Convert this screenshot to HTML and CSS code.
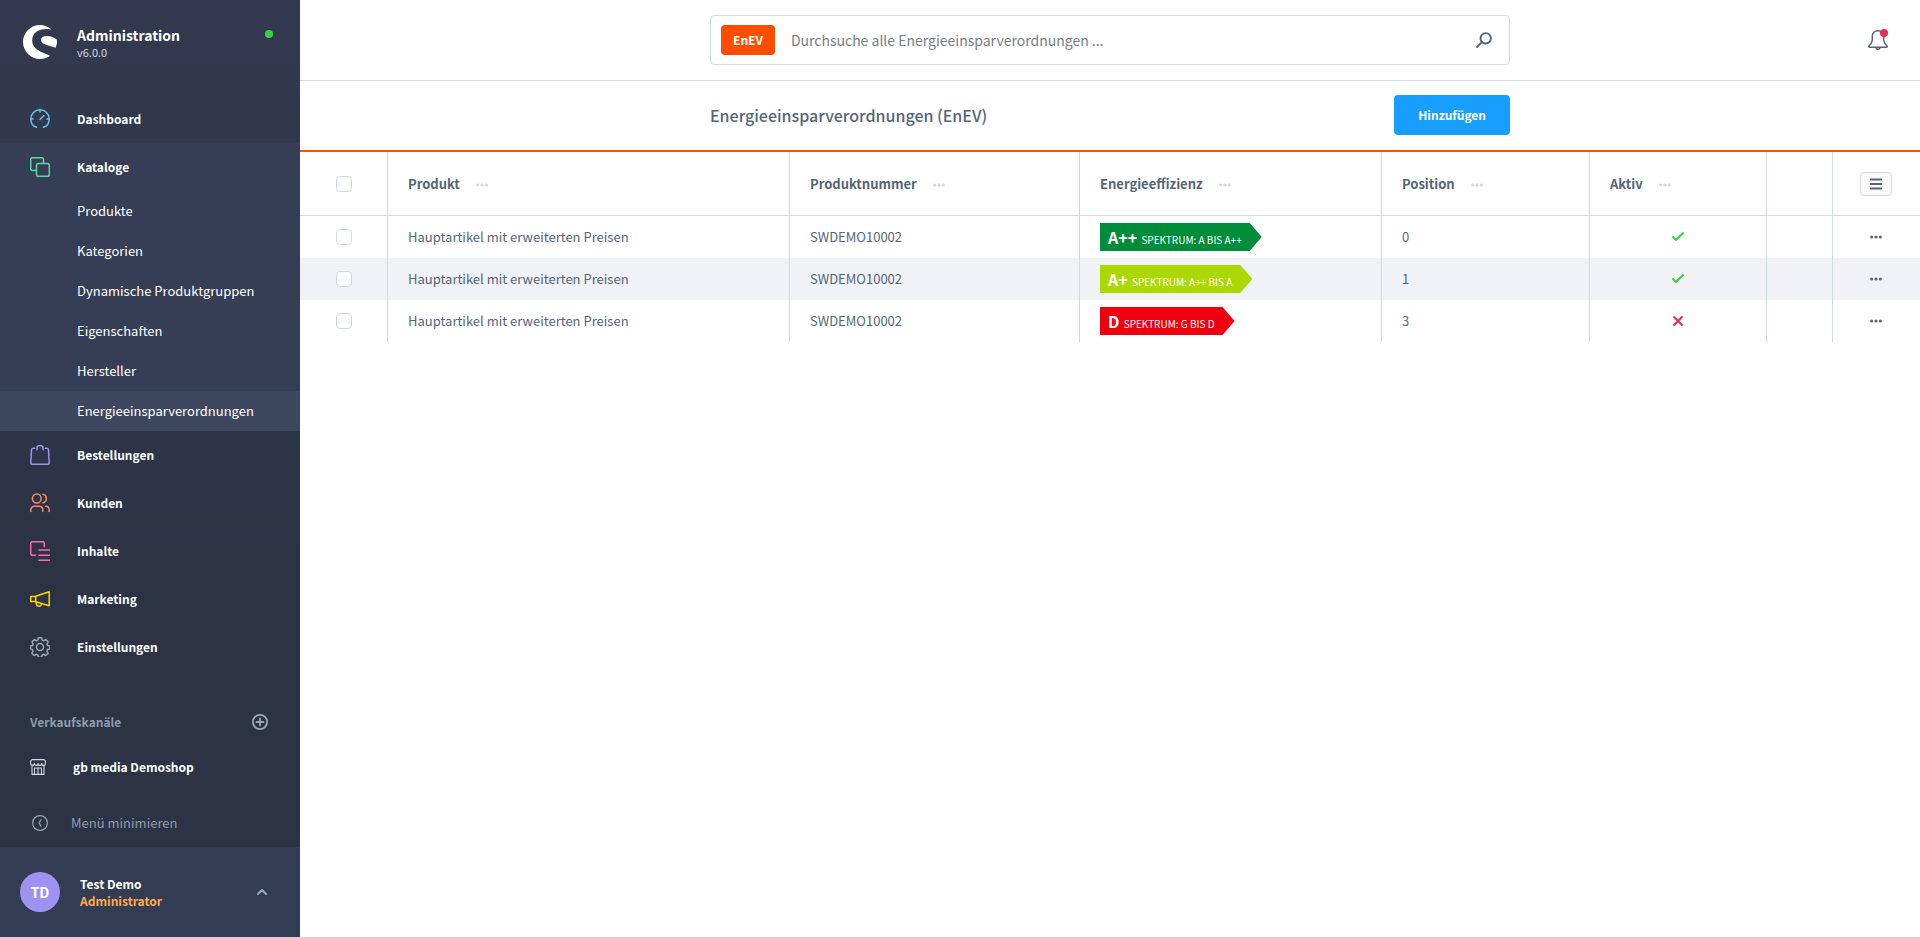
FILE: index.html
```html
<!DOCTYPE html>
<html lang="de">
<head>
<meta charset="utf-8">
<title>Energieeinsparverordnungen (EnEV) | Administration</title>
<link rel="stylesheet" href="styles.css">
</head>
<body>
<svg class="defs" aria-hidden="true">
  <symbol id="dots" viewBox="0 0 12 4"><circle cx="1.7" cy="2" r="1.6"/><circle cx="6" cy="2" r="1.6"/><circle cx="10.3" cy="2" r="1.6"/></symbol>
  <symbol id="check" viewBox="0 0 12 10"><path d="M1 5l3 3 7-7" fill="none" stroke="currentColor" stroke-width="2" stroke-linecap="round" stroke-linejoin="round"/></symbol>
  <symbol id="cross" viewBox="0 0 12 12"><path d="M2 2l8 8M10 2l-8 8" fill="none" stroke="currentColor" stroke-width="2" stroke-linecap="round"/></symbol>
</svg>
<div class="app">
  <aside class="sidebar">
    <header class="brand">
      <svg class="logo" viewBox="0 0 34 34" aria-hidden="true"><path fill="#fff" d="M28.500 4.600C25.400 1.600 21.300 0 17 0 7.600 0 0 7.600 0 17s7.600 17 17 17c3.700 0 7.100-1.200 10-3.300C22 28 9.200 25.500 9.200 15.500 9.200 8 15 4 23.500 4c1.800 0 3.500.2 5 .6z"/><path fill="#fff" d="M33.700 14.500C31.500 12.600 28 11 23.500 11c-3.500 0-5.500 1.500-5.500 4 0 4.800 8.500 5.500 14.500 7.800.8-1.800 1.500-4 1.500-5.800 0-.9-.1-1.700-.3-2.500z"/></svg>
      <div class="brand-text"><h1>Administration</h1><span>v6.0.0</span></div>
      <i class="online"></i>
    </header>
    <nav class="nav">
      <a class="item" href="#"><svg class="c-blue" viewBox="0 0 20 20"><path d="M6.500 18.300C3 17.200.8 13.800.8 10a9.200 9.200 0 0 1 18.400 0c0 3.800-2.200 7.200-5.700 8.300M10 .8V3M.8 10H3M17 10h2.200M10 10.500L13.800 6.600"/></svg>Dashboard</a>
      <div class="group">
        <a class="item" href="#"><svg class="c-green" viewBox="0 0 20 20"><rect x="6.500" y="6.500" width="12.800" height="12.800" rx="1.700"/><path d="M6 13.500H2.400A1.700 1.700 0 0 1 .7 11.800V2.400A1.700 1.700 0 0 1 2.400.7h9.400a1.700 1.700 0 0 1 1.700 1.700V6"/></svg>Kataloge</a>
        <a class="sub" href="#">Produkte</a>
        <a class="sub" href="#">Kategorien</a>
        <a class="sub" href="#">Dynamische Produktgruppen</a>
        <a class="sub" href="#">Eigenschaften</a>
        <a class="sub" href="#">Hersteller</a>
        <a class="sub current" href="#">Energieeinsparverordnungen</a>
      </div>
      <a class="item" href="#"><svg class="c-violet" viewBox="0 0 20 20"><path d="M4.800 3.300H3.200c-.9 0-1.600.6-1.700 1.500L.8 17.500c0 1 .7 1.800 1.700 1.800h15c1 0 1.700-.8 1.700-1.800L18.500 4.800c-.1-.9-.8-1.500-1.700-1.500h-1.600M7 4.800V3C7 1.500 8 .7 9.200.7h1.600C12 .7 13 1.500 13 3v1.800"/></svg>Bestellungen</a>
      <a class="item" href="#"><svg class="c-orange" viewBox="0 0 20 20"><circle cx="6.800" cy="5.500" r="4.400"/><path d="M.8 18.500V17c0-2.200 1.600-3.700 3.700-3.700h4.600c2.100 0 3.700 1.500 3.700 3.700v1.500M13 1.200a4.500 4.500 0 0 1 0 8.700M15.500 13.300c2.200 0 3.700 1.500 3.700 3.700v1.500"/></svg>Kunden</a>
      <a class="item" href="#"><svg class="c-pink" viewBox="0 0 20 20"><path d="M5.500 14.300h-3A1.700 1.700 0 0 1 .7 12.600V2.400A1.700 1.700 0 0 1 2.400.7h10.200a1.700 1.700 0 0 1 1.700 1.700v3.400M9 9h11M9 14.200h11M9 19.300h11"/></svg>Inhalte</a>
      <a class="item" href="#"><svg class="c-yellow" viewBox="0 0 20 20"><path d="M.7 7.500h5v5h-5zM5.700 7.300L19.200 2.800v14L5.700 12.700M6.200 13.500c0 2.500 1 3.700 2.800 3.700 1.400 0 2.300-.9 2.500-2.400"/></svg>Marketing</a>
      <a class="item" href="#"><svg class="c-grey" viewBox="0 0 20 20"><path d="M8.300.8h3.400l.5 2.300 1.700.7 2-1.300 2.400 2.400-1.300 2 .7 1.700 2 .5v2.800l-2.200.6-.6 1.600 1.300 2.100-2.400 2.300-2-1.200-1.600.7-.6 2.200H8.400l-.6-2.200-1.600-.7-2 1.200-2.400-2.300 1.300-2.100-.7-1.600-1.900-.6V9.100l2-.5.7-1.700-1.300-2 2.400-2.400 2 1.300 1.600-.7z"/><circle cx="10" cy="10" r="3.500"/></svg>Einstellungen</a>
    </nav>
    <section class="channels">
      <div class="channels-head"><h2>Verkaufskanäle</h2>
        <button class="icon-btn" aria-label="Verkaufskanal hinzufügen"><svg class="c-grey plus" viewBox="0 0 16 16"><circle cx="8" cy="8" r="7.100"/><path d="M8 4.500v7M4.500 8h7"/></svg></button></div>
      <a class="channel" href="#"><svg viewBox="0 0 16 16"><path d="M2 6.500v8.900h12V6.500M2 .6h12l1.400 1.600v2.200c0 1.200-.7 2-1.800 2s-1.900-.8-1.900-2c0 1.200-.8 2-1.800 2S8 5.600 8 4.400c0 1.200-.9 2-1.900 2s-1.800-.8-1.800-2c0 1.200-.8 2-1.900 2S.6 5.600.6 4.400V2.200zM4.500 15V9h7v6M8 9v6"/></svg>gb media Demoshop</a>
    </section>
    <button class="collapse"><svg class="c-grey" viewBox="0 0 16 16"><circle cx="8" cy="8" r="7.400"/><path d="M9 4.700L7 8l2 3.300"/></svg>Menü minimieren</button>
    <button class="user">
      <span class="avatar">TD</span>
      <span class="user-text"><b>Test Demo</b><em>Administrator</em></span>
      <svg class="c-grey chev" viewBox="0 0 10 6"><path d="M1 5l4-4 4 4"/></svg>
    </button>
  </aside>

  <main class="main">
    <header class="topbar">
      <label class="search"><span class="tag">EnEV</span>
        <input type="text" aria-label="Suche" placeholder="Durchsuche alle Energieeinsparverordnungen ...">
        <svg viewBox="0 0 16 16" aria-hidden="true"><circle cx="9.700" cy="6.300" r="5.200"/><path d="M5.900 10.100L1 15"/></svg>
      </label>
      <button class="bell" aria-label="Benachrichtigungen"><svg viewBox="0 0 20 20"><path d="M1.500 17.300c-.7 0-.9-.8-.5-1.300 1.500-1.600 3.300-2.700 3.300-6.500V6A5.200 5.200 0 0 1 9.500.8h1A5.200 5.200 0 0 1 15.700 6v3.500c0 3.800 1.800 4.900 3.300 6.500.4.500.2 1.300-.5 1.300zM8 17.800c.2 2 3.800 2 4 0"/></svg><i></i></button>
    </header>
    <div class="smartbar"><div class="smartbar-inner"><h2>Energieeinsparverordnungen (EnEV)</h2><button class="primary">Hinzufügen</button></div></div>
    <table class="grid">
      <colgroup><col class="w-check"><col class="w-product"><col class="w-number"><col class="w-energy"><col class="w-pos"><col class="w-active"><col class="w-empty"><col class="w-menu"></colgroup>
      <thead><tr>
        <th><input type="checkbox" aria-label="Alle auswählen"></th>
        <th>Produkt<svg class="dots"><use href="#dots"/></svg></th>
        <th>Produktnummer<svg class="dots"><use href="#dots"/></svg></th>
        <th>Energieeffizienz<svg class="dots"><use href="#dots"/></svg></th>
        <th>Position<svg class="dots"><use href="#dots"/></svg></th>
        <th>Aktiv<svg class="dots"><use href="#dots"/></svg></th>
        <th></th>
        <th><button class="settings" aria-label="Spalten"><svg viewBox="0 0 12 12"><path d="M0 1.500h12M0 6h12M0 10.500h12"/></svg></button></th>
      </tr></thead>
      <tbody>
        <tr><td><input type="checkbox" aria-label="Zeile 1 auswählen"></td><td>Hauptartikel mit erweiterten Preisen</td><td>SWDEMO10002</td><td><span class="energy e-dark"><b>A++</b> Spektrum: A bis A++</span></td><td>0</td><td><svg class="state yes"><use href="#check"/></svg></td><td></td><td><button class="more" aria-label="Aktionen"><svg><use href="#dots"/></svg></button></td></tr>
        <tr><td><input type="checkbox" aria-label="Zeile 2 auswählen"></td><td>Hauptartikel mit erweiterten Preisen</td><td>SWDEMO10002</td><td><span class="energy e-lime"><b>A+</b> Spektrum: A++ bis A</span></td><td>1</td><td><svg class="state yes"><use href="#check"/></svg></td><td></td><td><button class="more" aria-label="Aktionen"><svg><use href="#dots"/></svg></button></td></tr>
        <tr><td><input type="checkbox" aria-label="Zeile 3 auswählen"></td><td>Hauptartikel mit erweiterten Preisen</td><td>SWDEMO10002</td><td><span class="energy e-red"><b>D</b> Spektrum: G bis D</span></td><td>3</td><td><svg class="state no"><use href="#cross"/></svg></td><td></td><td><button class="more" aria-label="Aktionen"><svg><use href="#dots"/></svg></button></td></tr>
      </tbody>
    </table>
  </main>
</div>
</body>
</html>
```
FILE: styles.css
```css
* { box-sizing: border-box; }
body {
  margin: 0;
  font: 13px/20px "Noto Sans CJK SC", "Open Sans", sans-serif;
  color: #52667a;
  background: #fff;
}
h1, h2 { margin: 0; }
a { color: inherit; text-decoration: none; }
button { font: inherit; color: inherit; border: 0; padding: 0; background: none; cursor: pointer; }
svg { fill: none; flex: none; stroke: currentColor; stroke-linecap: round; stroke-linejoin: round; }
.defs { position: absolute; width: 0; height: 0; }
.app { display: flex; min-height: 100vh; }

/* Sidebar */
.sidebar {
  width: 300px;
  flex: none;
  display: flex;
  flex-direction: column;
  color: #fff;
  background: linear-gradient(#333a4f, #2b3345 60%, #2b3345);
}
.brand { display: flex; height: 95px; padding: 25px 27px 0 23px; }
.logo { width: 34px; height: 34px; stroke: none; }
.brand-text { flex: 1; margin-left: 20px; }
.brand h1 { font-size: 14px; line-height: 20px; font-weight: 700; }
.brand span { display: block; font-size: 11px; line-height: 14px; color: #d1d9e0; }
.online { width: 8px; height: 8px; margin-top: 5px; border-radius: 50%; background: #37d046; }
.item { display: flex; align-items: center; gap: 27px; height: 48px; padding-left: 30px; font-size: 12px; font-weight: 700; }
.item svg { width: 20px; height: 20px; stroke-width: 1.5; }
.group { background: #363e56; }
.sub { display: block; padding: 10px 0 10px 77px; }
.current { background: #3d4760; }
.c-blue { color: #61c8ec; }
.c-green { color: #57d9a3; }
.c-violet { color: #a092f0; }
.c-orange { color: #f88962; }
.c-pink { color: #ff68b4; }
.c-yellow { color: #ffd700; }
.c-grey { color: #9aa8b5; }
.channels { padding: 41px 30px 0; }
.channels-head { display: flex; align-items: center; justify-content: space-between; height: 20px; margin-right: 2px; color: #8b9dae; }
.channels h2 { font-size: 12px; }
.icon-btn { display: flex; }
.plus { width: 16px; height: 16px; stroke-width: 1.8; }
.channel { display: flex; align-items: center; gap: 27px; margin-top: 25px; font-size: 12px; font-weight: 700; }
.channel svg { width: 16px; height: 16px; stroke-width: 1.1; color: #d1d9e0; }
.collapse { display: flex; align-items: center; gap: 23px; height: 48px; margin-top: auto; padding-left: 32px; color: #8b9dae; }
.collapse svg { width: 16px; height: 16px; stroke-width: 1.2; }
.user { display: flex; align-items: center; height: 90px; padding: 0 33px 0 20px; background: #333c52; text-align: left; }
.avatar { width: 40px; height: 40px; border-radius: 50%; background: #a092f0; font-size: 14px; line-height: 40px; font-weight: 700; text-align: center; }
.user-text { flex: 1; margin-left: 20px; font-size: 12px; line-height: 17px; }
.user-text b, .user-text em { display: block; font-style: normal; font-weight: 700; }
.user-text em { color: #ffab52; }
.chev { width: 10px; height: 6px; stroke-width: 2; }

/* Header */
.main { flex: 1; min-width: 0; }
.topbar { position: relative; display: flex; justify-content: center; padding: 15px 0; border-bottom: 1px solid #d1d9e0; }
.search { display: flex; align-items: center; width: 800px; height: 50px; padding: 0 17px 0 10px; border: 1px solid #d1d9e0; border-radius: 4px; }
.tag { padding: 5px 12px; border-radius: 4px; background: #ff4d00; color: #fff; font-size: 12px; font-weight: 700; }
.search input { flex: 1; margin: 0 16px; padding: 0; border: 0; outline: 0; background: none; font: inherit; font-size: 14px; color: inherit; }
.search input::placeholder { color: #758089; opacity: 1; }
.search svg { width: 16px; height: 16px; stroke-width: 1.9; }
.bell { position: absolute; top: 30px; right: 32px; width: 20px; height: 22px; }
.bell svg { width: 20px; height: 20px; stroke-width: 1.5; }
.bell i { position: absolute; top: -1px; right: 0; width: 8px; height: 8px; border-radius: 50%; background: #e52e50; }
.smartbar { padding: 14px 0 15px; border-bottom: 2px solid #ff4d00; }
.smartbar-inner { display: flex; align-items: center; justify-content: space-between; width: 800px; margin: 0 auto; }
.smartbar h2 { font-size: 16px; line-height: 24px; font-weight: 500; }
.primary { height: 40px; padding: 0 24px; border-radius: 4px; background: #189eff; color: #fff; font-size: 12px; font-weight: 700; }

/* Data grid */
.grid { width: 100%; border-collapse: separate; border-spacing: 0; table-layout: fixed; }
.grid th, .grid td { padding: 0 0 0 20px; border-right: 1px solid #d1d9e0; text-align: left; white-space: nowrap; }
.grid th { height: 64px; border-bottom: 1px solid #d1d9e0; }
.grid td { height: 42px; }
.grid tbody tr:nth-child(even) { background: #f0f2f5; }
.grid th:first-child, .grid td:first-child, .grid td:nth-child(6) { padding: 0; text-align: center; }
.grid th:last-child, .grid td:last-child { padding: 0 1px 0 0; border-right: 0; text-align: center; }
.w-check { width: 88px; }
.w-product { width: 402px; }
.w-number { width: 290px; }
.w-energy { width: 302px; }
.w-pos { width: 208px; }
.w-active { width: 177px; }
.w-empty { width: 66px; }
.grid input { appearance: none; display: block; width: 16px; height: 16px; margin: 0 auto; border: 1px solid #d1d9e0; border-radius: 4px; background: #fff; }
.dots { width: 12px; height: 4px; margin-left: 16px; vertical-align: middle; fill: #d1d9e0; stroke: none; }
.settings { display: inline-flex; align-items: center; justify-content: center; width: 32px; height: 24px; border: 1px solid #d1d9e0; border-radius: 4px; background: #f9fafb; vertical-align: middle; }
.settings svg { width: 12px; height: 12px; stroke-width: 2; stroke-linecap: butt; }
.more { display: block; margin: 0 auto; }
.more svg { display: block; width: 12px; height: 4px; fill: #52667a; stroke: none; }
.state { display: block; width: 12px; height: 12px; margin: 0 auto; }
.yes { color: #37d046; }
.no { color: #e52e50; }
.energy { display: inline-block; height: 28px; padding: 0 20px 0 8px; clip-path: polygon(0 0, calc(100% - 12px) 0, 100% 50%, calc(100% - 12px) 100%, 0 100%); color: #fff; font-size: 10px; line-height: 28px; text-transform: uppercase; vertical-align: middle; }
.energy b { margin-right: 2px; font-size: 16px; }
.e-dark { background: #008c3a; }
.e-lime { background: #abd800; }
.e-red { background: #f0000f; }
```
